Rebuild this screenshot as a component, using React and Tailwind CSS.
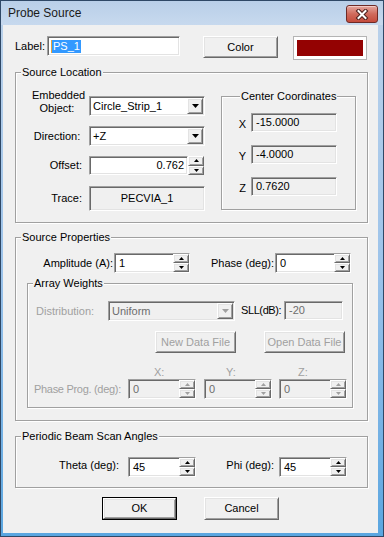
import React from 'react'

const sunken = 'border border-t-[#a0a0a0] border-l-[#a0a0a0] border-b-white border-r-white shadow-[inset_1px_1px_0_#696969,inset_-1px_-1px_0_#e3e3e3]'
const raised = 'border border-t-white border-l-white border-b-[#696969] border-r-[#696969] shadow-[inset_1px_1px_0_#e3e3e3,inset_-1px_-1px_0_#a0a0a0] bg-[#f0f0f0]'
const etched = 'border border-[#a0a0a0] shadow-[inset_1px_1px_0_#fff,1px_1px_0_#fff]'

function Tri({ up, dis, big }) {
  const fill = dis ? '#a0a0a0' : '#000'
  if (big) {
    return (
      <svg width="7" height="4" viewBox="0 0 7 4"><polygon points="0,0 7,0 3.5,4" fill={fill} /></svg>
    )
  }
  return (
    <svg width="5" height="3" viewBox="0 0 5 3">
      <polygon points={up ? '2.5,0 5,3 0,3' : '0,0 5,0 2.5,3'} fill={fill} />
    </svg>
  )
}

function SpinBtns({ dis }) {
  return (
    <div className="flex flex-col w-[16px] h-full">
      <div className={`${raised} flex-1 flex items-center justify-center`}><Tri up dis={dis} /></div>
      <div className={`${raised} flex-1 flex items-center justify-center`}><Tri dis={dis} /></div>
    </div>
  )
}

function SpinBox({ className, value, dis }) {
  return (
    <div className={`${sunken} ${className} h-[20px] flex ${dis ? 'bg-[#f0f0f0] text-[#6d6d6d]' : 'bg-white'}`}>
      <div className="flex-1 pl-[4px] leading-[18px]">{value}</div>
      <SpinBtns dis={dis} />
    </div>
  )
}

function Combo({ className, value, dis }) {
  return (
    <div className={`${sunken} ${className} h-[20px] p-[1px] flex ${dis ? 'bg-[#f0f0f0] text-[#6d6d6d]' : 'bg-white'}`}>
      <div className="flex-1 pl-[2px] leading-[16px]">{value}</div>
      <div className={`${raised} w-[16px] h-[16px] flex items-center justify-center`}><Tri big dis={dis} /></div>
    </div>
  )
}

function Group({ title, className, legend = 'ml-[5px]', children }) {
  return (
    <fieldset className={`${etched} ${className}`}>
      <legend className={`${legend} px-[1px] leading-[13px] bg-[#f0f0f0]`}>{title}</legend>
      {children}
    </fieldset>
  )
}

function ReadOnly({ value }) {
  return (
    <div className={`${sunken} w-[86px] h-[19px] ml-[5px] bg-[#f0f0f0] pl-[4px] leading-[17px]`}>{value}</div>
  )
}

function Button({ className, children, dis, def }) {
  const inner = (
    <div className={`${raised} w-full h-full flex items-center justify-center ${dis ? 'text-[#a0a0a0]' : ''}`}>{children}</div>
  )
  if (def) return <div className={`${className} border border-black`}>{inner}</div>
  return <div className={className}>{inner}</div>
}

export default function App() {
  return (
    <div className="w-[384px] h-[537px] flex flex-col border border-[#2f4866] bg-gradient-to-b from-[#bcd2ea] via-[#9cc3ea] to-[#5aa6e0] font-['Liberation_Sans',Arial,sans-serif] text-[11px] text-black overflow-hidden">
      {/* title bar */}
      <div className="h-[24px] flex items-start bg-gradient-to-b from-[#b9cfe8] to-[#c7d9ee]">
        <div className="pl-[7px] pt-[5px] text-[12px] leading-[15px] text-[#1a1a1a]">Probe Source</div>
        <div className="ml-auto mr-[5px] mt-[4px] w-[32px] h-[18px] rounded-[3px] border border-[#6e2a26] bg-gradient-to-b from-[#e3a69e] via-[#d06a5c] to-[#c44b3c] shadow-[inset_0_1px_0_#f3cbc5] flex items-center justify-center">
          <svg width="14" height="11" viewBox="0 0 14 11">
            <path d="M3.5 2 L10.5 9 M10.5 2 L3.5 9" stroke="#4a1e1c" strokeWidth="4" strokeLinecap="square" />
            <path d="M3.5 2 L10.5 9 M10.5 2 L3.5 9" stroke="#fff" strokeWidth="2" strokeLinecap="square" />
          </svg>
        </div>
      </div>

      {/* client */}
      <div className="flex-1 bg-[#f0f0f0] ml-[2px] mr-[5px] mb-[3px]">
        {/* label row */}
        <div className="flex items-start pt-[11px]">
          <div className="ml-[12px] w-[32px] leading-[20px]">Label:</div>
          <div className={`${sunken} w-[133px] h-[20px] bg-white flex items-center pl-[3px]`}>
            <span className="w-[1px] h-[13px] bg-[#e8a33c]" />
            <span className="bg-[#3399ff] text-white leading-[13px] px-[1px]">PS_1</span>
          </div>
          <Button className="ml-[23px] w-[75px] h-[22px]">Color</Button>
          <div className="ml-[15px] w-[74px] h-[24px] border border-[#b4b4b4] bg-white p-[3px]">
            <div className="w-full h-full bg-[#940202]" />
          </div>
        </div>

        {/* Source Location */}
        <Group title="Source Location" className="mt-[6px] ml-[12px] w-[353px] pb-[11px]">
          <div className="flex items-start">
            <div className="flex flex-col">
              <div className="flex items-start mt-[10px]">
                <div className="w-[66px] flex justify-end">
                  <div className="w-[50px] text-center leading-[13px]">Embedded<br />Object:</div>
                </div>
                <Combo className="ml-[7px] mt-[7px] w-[116px]" value="Circle_Strip_1" />
              </div>
              <div className="flex items-start mt-[10px]">
                <div className="w-[66px] flex justify-end">
                  <div className="w-[50px] text-center leading-[20px]">Direction:</div>
                </div>
                <Combo className="ml-[7px] w-[116px]" value="+Z" />
              </div>
              <div className="flex items-start mt-[10px]">
                <div className="w-[66px] text-right leading-[19px]">Offset:</div>
                <div className={`${sunken} ml-[7px] w-[99px] h-[19px] bg-white text-right pr-[3px] leading-[17px]`}>0.762</div>
                <div className="h-[19px]"><SpinBtns /></div>
              </div>
              <div className="flex items-start mt-[11px]">
                <div className="w-[66px] text-right leading-[25px]">Trace:</div>
                <div className={`${sunken} ml-[7px] w-[116px] h-[25px] bg-[#f0f0f0] text-center leading-[23px]`}>PECVIA_1</div>
              </div>
            </div>

            <Group title="Center Coordinates" legend="ml-[18px]" className="ml-[16px] mt-[11px] w-[135px] pb-[12px]">
              <div className="flex items-center mt-[10px]">
                <div className="w-[24px] text-right pt-[3px]">X</div>
                <ReadOnly value="-15.0000" />
              </div>
              <div className="flex items-center mt-[12px]">
                <div className="w-[24px] text-right pt-[3px]">Y</div>
                <ReadOnly value="-4.0000" />
              </div>
              <div className="flex items-center mt-[13px]">
                <div className="w-[24px] text-right pt-[3px]">Z</div>
                <ReadOnly value="0.7620" />
              </div>
            </Group>
          </div>
        </Group>

        {/* Source Properties */}
        <Group title="Source Properties" className="mt-[8px] ml-[12px] w-[353px] pb-[12px]">
          <div className="flex items-start mt-[9px]">
            <div className="w-[97px] text-right leading-[20px]">Amplitude (A):</div>
            <SpinBox className="ml-[1px] w-[76px]" value="1" />
            <div className="w-[84px] text-right leading-[20px]">Phase (deg):</div>
            <SpinBox className="ml-[1px] w-[76px]" value="0" />
          </div>

          <Group title="Array Weights" className="mt-[4px] ml-[11px] w-[326px] pb-[8px]">
            <div className="flex items-start mt-[11px]">
              <div className="w-[80px] pl-[8px] leading-[20px] text-[#a0a0a0]">Distribution:</div>
              <Combo className="w-[127px]" value="Uniform" dis />
              <div className="ml-[6px] w-[43px] whitespace-nowrap leading-[19px] tracking-[-0.4px]">SLL(dB):</div>
              <div className={`${sunken} w-[59px] h-[19px] bg-[#f0f0f0] text-[#6d6d6d] pl-[4px] leading-[17px]`}>-20</div>
            </div>
            <div className="flex mt-[10px]">
              <Button className="ml-[127px] w-[81px] h-[22px]" dis>New Data File</Button>
              <Button className="ml-[28px] w-[81px] h-[22px]" dis>Open Data File</Button>
            </div>
            <div className="flex mt-[13px] leading-[13px] text-[#a0a0a0]">
              <div className="ml-[126px] w-[72px]">X:</div>
              <div className="w-[72px]">Y:</div>
              <div>Z:</div>
            </div>
            <div className="flex items-start">
              <div className="w-[100px] pl-[6px] leading-[20px] text-[#a0a0a0] whitespace-nowrap tracking-[-0.3px]">Phase Prog. (deg):</div>
              <SpinBox className="w-[68px]" value="0" dis />
              <SpinBox className="ml-[8px] w-[68px]" value="0" dis />
              <SpinBox className="ml-[7px] w-[68px]" value="0" dis />
            </div>
          </Group>
        </Group>

        {/* Periodic Beam Scan Angles */}
        <Group title="Periodic Beam Scan Angles" className="mt-[9px] ml-[12px] w-[353px] pb-[10px]">
          <div className="flex items-start mt-[14px]">
            <div className="w-[112px] text-right pr-[9px] leading-[17px]">Theta (deg):</div>
            <SpinBox className="w-[68px]" value="45" />
            <div className="w-[83px] text-right pr-[5px] leading-[17px]">Phi (deg):</div>
            <SpinBox className="w-[68px]" value="45" />
          </div>
        </Group>

        {/* buttons */}
        <div className="flex mt-[9px]">
          <Button className="ml-[99px] w-[75px] h-[23px]" def>OK</Button>
          <Button className="ml-[27px] w-[75px] h-[23px]">Cancel</Button>
        </div>
      </div>
    </div>
  )
}
